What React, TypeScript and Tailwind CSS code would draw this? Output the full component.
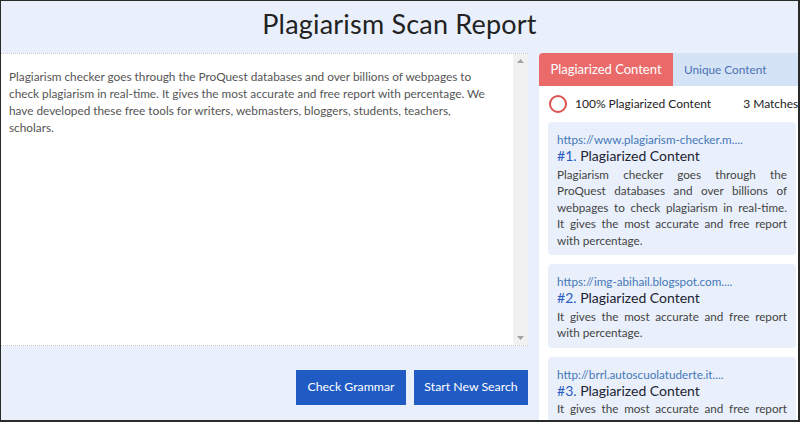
import React from "react";

const font = { fontFamily: "Lato, 'Noto Sans', sans-serif" };

function Card({ url, n, lines }: { url: string; n: number; lines: string[] }) {
  return (
    <div className="rounded-[4px] bg-[#e9f0fb] px-[9px] pt-[9px] pb-[7px]">
      <div className="text-[11.7px] leading-[17px] text-[#4677b8] whitespace-nowrap">{url}</div>
      <div className="text-[14px] leading-[16.5px] text-[#1c2333] whitespace-nowrap">
        <span className="text-[#2a5bbf]">#{n}.</span> Plagiarized Content
      </div>
      <div className="mt-[1px] text-[11.7px] leading-[16.5px] text-[#444]">
        {lines.map((l, i) => (
          <div
            key={i}
            className={
              i < lines.length - 1
                ? "text-justify [text-align-last:justify] whitespace-nowrap"
                : "whitespace-nowrap"
            }
          >
            {l}
          </div>
        ))}
      </div>
    </div>
  );
}

export default function App() {
  return (
    <div
      style={font}
      className="w-[800px] h-[422px] overflow-hidden bg-[#e9f0fb] border-l border-t border-r-2 border-b-2 border-[#2a2a2a]"
    >
      <div className="h-[52px] flex items-center justify-center pb-[7px]">
        <h1 className="text-[27px] leading-none text-[#222] tracking-[0.2px]">Plagiarism Scan Report</h1>
      </div>
      <div className="flex">
        <div className="w-[527px] shrink-0">
          <div className="h-[293px] flex bg-white border-t border-b border-dotted border-[#c8c8c8]">
            <div className="flex-1 px-[8px] pt-[14px] text-[11.8px] leading-[17px] text-[#555] whitespace-nowrap">
              Plagiarism checker goes through the ProQuest databases and over billions of webpages to
              <br />
              check plagiarism in real-time. It gives the most accurate and free report with percentage. We
              <br />
              have developed these free tools for writers, webmasters, bloggers, students, teachers,
              <br />
              scholars.
            </div>
            <div className="w-[15px] bg-[#f1f1f1] flex flex-col items-center justify-between py-[5px]">
              <svg width="7" height="4" viewBox="0 0 7 4"><path d="M0 4 L3.5 0 L7 4 Z" fill="#a3a3a3" /></svg>
              <svg width="7" height="4" viewBox="0 0 7 4"><path d="M0 0 L3.5 4 L7 0 Z" fill="#a3a3a3" /></svg>
            </div>
          </div>
          <div className="flex justify-end gap-[8px] pt-[24px]">
            <button className="w-[110px] h-[35px] bg-[#1f5bc3] text-white text-[12.3px]">Check Grammar</button>
            <button className="w-[114px] h-[35px] bg-[#1f5bc3] text-white text-[12.3px]">Start New Search</button>
          </div>
        </div>
        <div className="ml-[11px] w-[266px] shrink-0">
          <div className="flex h-[33px]">
            <div className="w-[134px] bg-[#ea6a6a] text-white text-[13px] rounded-tl-[4px] flex items-center justify-center">
              Plagiarized Content
            </div>
            <div className="flex-1 bg-[#d5e3f7] text-[#4a72b0] text-[11.8px] flex items-center pl-[11px]">Unique Content</div>
          </div>
          <div className="bg-white px-[9px] pb-[20px]">
            <div className="h-[36px] flex items-center text-[12px] text-[#222] whitespace-nowrap">
              <div className="w-[18px] h-[18px] rounded-full border-2 border-[#d9534f] ml-[1px] shrink-0" />
              <span className="ml-[8px]">100% Plagiarized Content</span>
              <span className="ml-[32px]">3 Matches</span>
            </div>
            <div className="flex flex-col gap-[9px]">
              <Card
                url="https://www.plagiarism-checker.m...."
                n={1}
                lines={[
                  "Plagiarism checker goes through the",
                  "ProQuest databases and over billions of",
                  "webpages to check plagiarism in real-time.",
                  "It gives the most accurate and free report",
                  "with percentage.",
                ]}
              />
              <Card
                url="https://img-abihail.blogspot.com...."
                n={2}
                lines={["It gives the most accurate and free report", "with percentage."]}
              />
              <Card
                url="http://brrl.autoscuolatuderte.it...."
                n={3}
                lines={["It gives the most accurate and free report", "with percentage."]}
              />
            </div>
          </div>
        </div>
      </div>
    </div>
  );
}
